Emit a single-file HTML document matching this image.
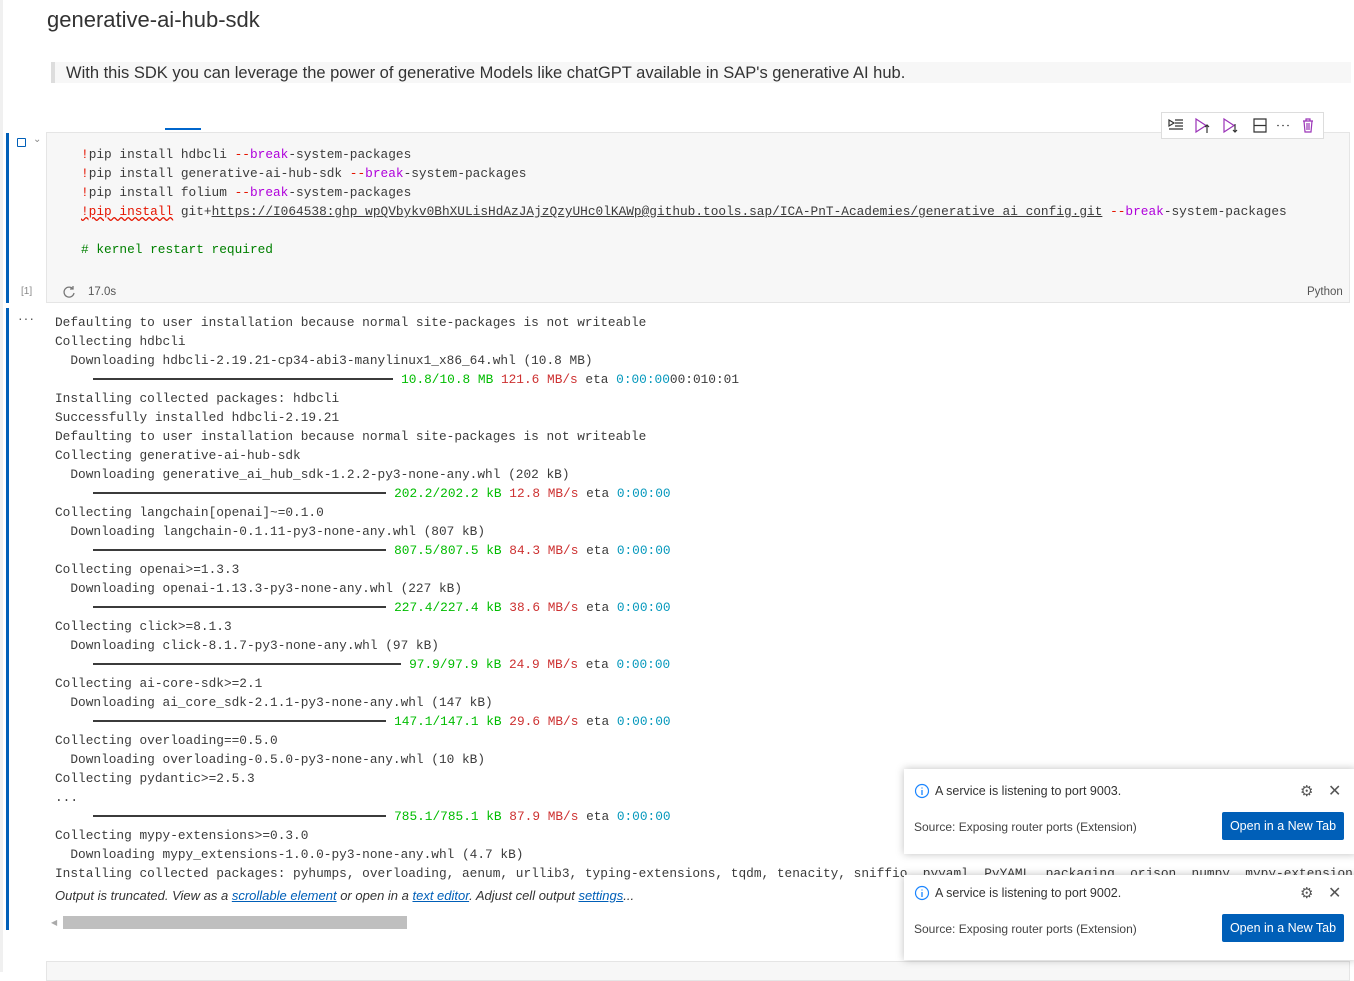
<!DOCTYPE html>
<html><head><meta charset="utf-8"><style>
*{margin:0;padding:0;box-sizing:border-box}
body{width:1354px;height:972px;overflow:hidden;background:#fff;position:relative;font-family:"Liberation Sans",sans-serif;color:#3b3b3b}
.abs{position:absolute}
.mono{font-family:"Liberation Mono",monospace;font-size:12.8px;line-height:19px;white-space:pre;color:#3b3b3b}
.bar{display:inline-block;height:2px;background:#3b3b3b;vertical-align:middle;margin-top:-2px}
.g{color:#00bc00}.r{color:#cd3131}.c{color:#0598bc}
.ex{color:#e51400}.kw{color:#af00db}.cm{color:#008000}
.notif{position:absolute;left:904px;width:452px;height:85px;background:#fff;box-shadow:0 0 8px rgba(0,0,0,.25);font-size:12.5px}
.btn{position:absolute;left:318px;top:43px;width:122px;height:28px;background:#005fb8;color:#fff;font-size:12.5px;line-height:28px;text-align:center;border-radius:2px}
</style></head><body>
<div class="abs" style="left:0;top:0;width:3px;height:972px;background:#f0f0f0"></div>
<div class="abs" style="left:47px;top:7px;font-size:22px;color:#333">generative-ai-hub-sdk</div>
<div class="abs" style="left:51px;top:62px;width:1300px;height:21px;background:#f7f7f7;border-left:4px solid #ddd"></div>
<div class="abs" style="left:66px;top:63px;font-size:16.5px;line-height:21px;color:#333">With this SDK you can leverage the power of generative Models like chatGPT available in SAP's generative AI hub.</div>

<div class="abs" style="left:165px;top:128px;width:36px;height:2px;background:#0066cc"></div>
<div class="abs" style="left:6px;top:133px;width:3px;height:170px;background:#005fb8"></div>
<div class="abs" style="left:6px;top:308px;width:3px;height:622px;background:#005fb8"></div>
<div class="abs" style="left:17px;top:138px;width:9px;height:9px;border:1px solid #005fb8;border-radius:1px"></div>
<div class="abs" style="left:33px;top:134px;font-size:10px;color:#888">&#8964;</div>

<div class="abs" style="left:46px;top:132px;width:1304px;height:171px;background:#f7f7f7;border:1px solid #e5e5e5"></div>
<div class="abs mono" style="left:81px;top:145px"><span class="ex">!</span>pip install hdbcli <span class="ex">--</span><span class="kw">break</span>-system-packages
<span class="ex">!</span>pip install generative-ai-hub-sdk <span class="ex">--</span><span class="kw">break</span>-system-packages
<span class="ex">!</span>pip install folium <span class="ex">--</span><span class="kw">break</span>-system-packages
<span class="ex" style="text-decoration:underline wavy #e51400">!pip install</span> git+<span style="text-decoration:underline">https://I064538: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@github.tools.sap/ICA-PnT-Academies/generative_ai_config.git</span> <span class="ex">--</span><span class="kw">break</span>-system-packages

<span class="cm"># kernel restart required</span></div>
<div class="abs" style="left:21px;top:286px;font-size:10px;color:#888">[1]</div>
<svg class="abs" style="left:62px;top:285px" width="14" height="14" viewBox="0 0 14 14"><path d="M11 4A5 5 0 1 0 12 8M11 1v3h-3" fill="none" stroke="#777" stroke-width="1.3"/></svg>
<div class="abs" style="left:88px;top:286px;font-size:11.5px;color:#555">17.0s</div>
<div class="abs" style="left:1307px;top:286px;font-size:11.5px;color:#555">Python</div>

<div class="abs" style="left:1161px;top:112px;width:163px;height:27px;background:#fff;border:1px solid #ddd"></div>
<svg class="abs" style="left:1161px;top:112px" width="163" height="27" viewBox="0 0 163 27" fill="none" stroke-width="1.2">
<path d="M8 8l5 3-5 3zM14 8h8M14 11h8M14 14h8M8 17h14" stroke="#333"/>
<path d="M35 7v13l10-6.5z" stroke="#9b34b8"/><path d="M46 13v8M44 15l2-2 2 2" stroke="#333"/>
<path d="M63 7v13l10-6.5z" stroke="#9b34b8"/><path d="M74 12v8M72 18l2 2 2-2" stroke="#333"/>
<path d="M93 7h12v13h-12zM93 13.5h12" stroke="#333"/>
<circle cx="117" cy="13.5" r=".8" fill="#333"/><circle cx="122" cy="13.5" r=".8" fill="#333"/><circle cx="127" cy="13.5" r=".8" fill="#333"/>
<path d="M142 9h10M145 9V7h4v2M143 9l1 11h6l1-11M146 11v7M148 11v7" stroke="#9b34b8"/>
</svg>
<div class="abs" style="left:18px;top:310px;font-size:14px;color:#555;letter-spacing:1px">&middot;&middot;&middot;</div>

<div class="abs mono" style="left:55px;top:313px">Defaulting to user installation because normal site-packages is not writeable
Collecting hdbcli
  Downloading hdbcli-2.19.21-cp34-abi3-manylinux1_x86_64.whl (10.8 MB)
     <span class="bar" style="width:300px"></span> <span class="g">10.8/10.8 MB</span> <span class="r">121.6 MB/s</span> eta <span class="c">0:00:00</span>00:010:01
Installing collected packages: hdbcli
Successfully installed hdbcli-2.19.21
Defaulting to user installation because normal site-packages is not writeable
Collecting generative-ai-hub-sdk
  Downloading generative_ai_hub_sdk-1.2.2-py3-none-any.whl (202 kB)
     <span class="bar" style="width:293px"></span> <span class="g">202.2/202.2 kB</span> <span class="r">12.8 MB/s</span> eta <span class="c">0:00:00</span>
Collecting langchain[openai]~=0.1.0
  Downloading langchain-0.1.11-py3-none-any.whl (807 kB)
     <span class="bar" style="width:293px"></span> <span class="g">807.5/807.5 kB</span> <span class="r">84.3 MB/s</span> eta <span class="c">0:00:00</span>
Collecting openai>=1.3.3
  Downloading openai-1.13.3-py3-none-any.whl (227 kB)
     <span class="bar" style="width:293px"></span> <span class="g">227.4/227.4 kB</span> <span class="r">38.6 MB/s</span> eta <span class="c">0:00:00</span>
Collecting click>=8.1.3
  Downloading click-8.1.7-py3-none-any.whl (97 kB)
     <span class="bar" style="width:308px"></span> <span class="g">97.9/97.9 kB</span> <span class="r">24.9 MB/s</span> eta <span class="c">0:00:00</span>
Collecting ai-core-sdk>=2.1
  Downloading ai_core_sdk-2.1.1-py3-none-any.whl (147 kB)
     <span class="bar" style="width:293px"></span> <span class="g">147.1/147.1 kB</span> <span class="r">29.6 MB/s</span> eta <span class="c">0:00:00</span>
Collecting overloading==0.5.0
  Downloading overloading-0.5.0-py3-none-any.whl (10 kB)
Collecting pydantic>=2.5.3
...
     <span class="bar" style="width:293px"></span> <span class="g">785.1/785.1 kB</span> <span class="r">87.9 MB/s</span> eta <span class="c">0:00:00</span>
Collecting mypy-extensions>=0.3.0
  Downloading mypy_extensions-1.0.0-py3-none-any.whl (4.7 kB)
Installing collected packages: pyhumps, overloading, aenum, urllib3, typing-extensions, tqdm, tenacity, sniffio, pyyaml, PyYAML, packaging, orjson, numpy, mypy-extension</div>
<div class="abs" style="left:55px;top:888px;font-size:13px;font-style:italic;color:#333">Output is truncated. View as a <span style="color:#005fb8;text-decoration:underline">scrollable element</span> or open in a <span style="color:#005fb8;text-decoration:underline">text editor</span>. Adjust cell output <span style="color:#005fb8;text-decoration:underline">settings</span>...</div>
<div class="abs" style="left:51px;top:918px;font-size:8px;color:#aaa">&#9664;</div>
<div class="abs" style="left:63px;top:916px;width:344px;height:13px;background:#bfbfbf"></div>
<div class="abs" style="left:46px;top:961px;width:1304px;height:20px;background:#f7f7f7;border:1px solid #e5e5e5"></div>

<div class="notif" style="top:769px">
<svg class="abs" style="left:10px;top:14px" width="16" height="16"><circle cx="8" cy="8" r="6.5" fill="none" stroke="#1a85ff" stroke-width="1.2"/><path d="M8 7v5M8 4.5v1" stroke="#1a85ff" stroke-width="1.3"/></svg>
<div class="abs" style="left:31px;top:15px;color:#333">A service is listening to port 9003.</div>
<div class="abs" style="left:396px;top:13px;font-size:15px;color:#555">&#9881;</div>
<div class="abs" style="left:424px;top:12px;font-size:16px;color:#555">&#10005;</div>
<div class="abs" style="left:10px;top:51px;color:#444;font-size:12px">Source: Exposing router ports (Extension)</div>
<div class="btn">Open in a New Tab</div>
</div>
<div class="notif" style="top:875px">
<svg class="abs" style="left:10px;top:10px" width="16" height="16"><circle cx="8" cy="8" r="6.5" fill="none" stroke="#1a85ff" stroke-width="1.2"/><path d="M8 7v5M8 4.5v1" stroke="#1a85ff" stroke-width="1.3"/></svg>
<div class="abs" style="left:31px;top:11px;color:#333">A service is listening to port 9002.</div>
<div class="abs" style="left:396px;top:9px;font-size:15px;color:#555">&#9881;</div>
<div class="abs" style="left:424px;top:8px;font-size:16px;color:#555">&#10005;</div>
<div class="abs" style="left:10px;top:47px;color:#444;font-size:12px">Source: Exposing router ports (Extension)</div>
<div class="btn" style="top:39px">Open in a New Tab</div>
</div>
</body></html>
